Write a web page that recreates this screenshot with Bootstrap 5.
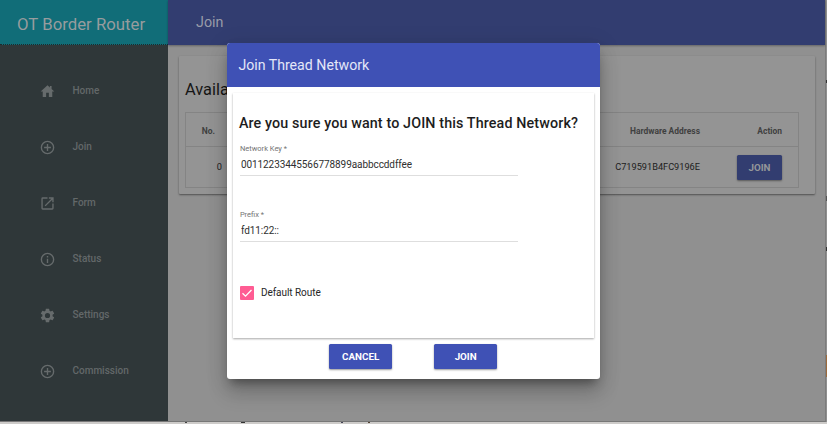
<!DOCTYPE html>
<html lang="en">
<head>
<meta charset="utf-8">
<meta name="viewport" content="width=device-width, initial-scale=1">
<title>OT Border Router</title>
<link href="https://cdn.jsdelivr.net/npm/bootstrap@5.3.0/dist/css/bootstrap.min.css" rel="stylesheet">
<style>
body{font-family:Roboto,sans-serif;font-size:10px;line-height:1.4;color:#202020;height:424px;
background:linear-gradient(#444,#444) 185px 422px/2px 1px no-repeat,linear-gradient(#333,#333) 241px 422px/4px 1px no-repeat,linear-gradient(#445,#445) 341px 422px/2px 1px no-repeat,linear-gradient(#543,#543) 368px 422px/2px 1px no-repeat,linear-gradient(#333,#333) 826px 80px/1px 3px no-repeat,linear-gradient(#555,#555) 826px 196px/1px 5px no-repeat,linear-gradient(#333,#333) 826px 247px/1px 4px no-repeat,linear-gradient(#9c6a3c,#9c6a3c) 826px 355px/1px 22px no-repeat,linear-gradient(#909090,#909090) 826px 0/1px 422px no-repeat,#cdcbc9}
.app{height:422px;margin-right:1px;background:#909090;border-bottom:1px solid #777;border-right:1px solid #7c7c7c}
.side{width:168px;background:#2f3739}
.brand{height:45px;background:#116d78;color:#979c9e;font-size:16.8px;padding:5px 0 0 17px;border-bottom:1px dotted #1c2a2d}
.side .nav-link{height:56px;padding:0 0 0 40px;color:#636869;font-weight:500;font-size:10px}
.side .nav{padding-top:18px}
.side svg{width:15px;height:15px;margin-right:17.5px;fill:#666b6c}
.topbar{height:45px;background:#323d70;color:#989ba8;font-size:14.3px;padding:0 0 0 28px;box-shadow:0 1px 2px rgba(0,0,0,.3)}
.panel{margin:11px 10px 0 11px;height:138px;background:#949494;border-radius:1px;box-shadow:0 1px 2px rgba(0,0,0,.45);padding:24px 16px 0 6px}
.panel h1{font-size:16.4px;line-height:20px;font-weight:400;margin-bottom:12px;color:#161616}
.grid{height:76px;border:1px solid #848484}
.grid .line{padding-right:16px}
.grid .heads{height:34px;padding-top:4px;border-bottom:1px solid #848484;color:#404040;font-weight:700;font-size:8.45px}
.cell-no{width:29px;text-align:right}
.cell-no.val{width:36px}
.cell-act{width:82px;text-align:right}
.vals{height:40px;padding-top:1px;font-size:9.2px;color:#202020;font-weight:400}
.act{background:#3f51b5;border:0;border-radius:1.5px;color:#fff;font-size:9.8px;font-weight:700;line-height:25px;height:25px;padding:0;width:63px;box-shadow:0 1px 2px rgba(0,0,0,.4)}
.act.dim{background:#323d70;color:#959799;width:45px}
.dialog-box{left:227.4px;top:42.5px;width:372.5px;height:336.5px;background:#fff;border:0;border-radius:3px;box-shadow:0 7px 9px -4px rgba(0,0,0,.35),0 14px 20px 0 rgba(0,0,0,.18),0 4px 22px 2px rgba(0,0,0,.1)}
.dialog-head{height:44.5px;background:#3f51b5;color:#e4e7f8;border-radius:3px 3px 0 0;font-size:14.15px;padding:2px 0 0 11px}
.sheet{margin:6px 5.5px 0;height:245px;padding:21.500px 6px 0;box-shadow:0 1px 2px rgba(0,0,0,.35)}
.sheet h2{font-size:14.3px;line-height:17px;font-weight:500;letter-spacing:.13px;margin:0 0 12px;color:#1d1d1d;white-space:nowrap}
.fld{width:278px;margin-left:1px;height:66px}
.fld label{display:block;font-size:7.5px;line-height:9px;color:#747474}
.fld input{border:0;border-bottom:1px solid #dedede;border-radius:0;padding:2px 1px 0;font-size:10px;letter-spacing:-.08px;height:23px;color:#303030;width:100%;display:block;background:none}
.tick{width:14px;height:14px;background:#ff5c93;border-radius:1px}
.route{font-size:10px;letter-spacing:-.05px;margin:10px 0 0 1px;gap:7px;color:#262626}
.choices{gap:42px;padding:5.500px 1px 0 0}
</style>
<script src="https://cdn.jsdelivr.net/npm/bootstrap@5.3.0/dist/js/bootstrap.bundle.min.js"></script>
</head>
<body class="overflow-hidden position-relative">
<div class="app d-flex">
  <aside class="side flex-shrink-0">
    <div class="brand d-flex align-items-center text-nowrap">OT Border Router</div>
    <nav class="nav flex-column flex-nowrap">
      <a class="nav-link d-flex align-items-center" href="#"><svg viewBox="1 1 22 22"><path d="M10 20v-6h4v6h5v-8h3L18 8.400V4h-2.500v2.100L12 3 2 12h3v8z"/></svg>Home</a>
      <a class="nav-link d-flex align-items-center" href="#"><svg viewBox="1 1 22 22"><path d="M13 7h-2v4H7v2h4v4h2v-4h4v-2h-4V7zM12 2a10 10 0 1 0 0 20 10 10 0 0 0 0-20zm0 18a8 8 0 1 1 0-16 8 8 0 0 1 0 16z"/></svg>Join</a>
      <a class="nav-link d-flex align-items-center" href="#"><svg viewBox="1 1 22 22"><path d="M19 19H5V5h7V3H5a2 2 0 0 0-2 2v14a2 2 0 0 0 2 2h14a2 2 0 0 0 2-2v-7h-2v7zM14 3v2h3.600l-9.800 9.800 1.400 1.400L19 6.400V10h2V3h-7z"/></svg>Form</a>
      <a class="nav-link d-flex align-items-center" href="#"><svg viewBox="1 1 22 22"><path d="M11 17h2v-6h-2v6zm1-15a10 10 0 1 0 0 20 10 10 0 0 0 0-20zm0 18a8 8 0 1 1 0-16 8 8 0 0 1 0 16zM11 9h2V7h-2v2z"/></svg>Status</a>
      <a class="nav-link d-flex align-items-center" href="#"><svg viewBox="1 1 22 22"><path d="M19.430 12.980c.04-.32.07-.64.07-.98s-.03-.66-.07-.98l2.110-1.650c.19-.15.24-.42.12-.64l-2-3.460c-.12-.22-.39-.3-.61-.22l-2.490 1c-.52-.4-1.080-.73-1.690-.98l-.38-2.650A.49.49 0 0 0 14 2h-4c-.25 0-.46.18-.49.42l-.38 2.650c-.61.25-1.170.59-1.690.98l-2.490-1c-.23-.09-.49 0-.61.22l-2 3.460c-.13.22-.07.49.12.64l2.110 1.650c-.04.32-.07.65-.07.98s.03.66.07.98l-2.110 1.650c-.19.15-.24.42-.12.64l2 3.460c.12.22.39.3.61.22l2.490-1c.52.4 1.080.73 1.690.98l.38 2.650c.03.24.24.42.49.42h4c.25 0 .46-.18.49-.42l.38-2.650c.61-.25 1.170-.59 1.690-.98l2.490 1c.23.09.49 0 .61-.22l2-3.460c.12-.22.07-.49-.12-.64zM12 15.800a3.800 3.800 0 1 1 0-7.600 3.800 3.800 0 0 1 0 7.600z"/></svg>Settings</a>
      <a class="nav-link d-flex align-items-center" href="#"><svg viewBox="1 1 22 22"><path d="M13 7h-2v4H7v2h4v4h2v-4h4v-2h-4V7zM12 2a10 10 0 1 0 0 20 10 10 0 0 0 0-20zm0 18a8 8 0 1 1 0-16 8 8 0 0 1 0 16z"/></svg>Commission</a>
    </nav>
  </aside>
  <main class="flex-grow-1">
    <header class="topbar d-flex align-items-center">Join</header>
    <section class="panel">
      <h1>Availa</h1>
      <div class="grid">
        <div class="line heads d-flex align-items-center"><span class="cell-no">No.</span><span class="ms-auto">Hardware Address</span><span class="cell-act">Action</span></div>
        <div class="line vals d-flex align-items-center"><span class="cell-no val">0</span><span class="ms-auto">C719591B4FC9196E</span><span class="cell-act"><button class="btn act dim">JOIN</button></span></div>
      </div>
    </section>
  </main>
</div>
<div class="dialog-box modal-content position-absolute" role="dialog" aria-label="Join Thread Network">
  <div class="dialog-head d-flex align-items-center">Join Thread Network</div>
  <div class="sheet">
    <h2>Are you sure you want to JOIN this Thread Network?</h2>
    <div class="fld"><label for="key">Network Key *</label><input id="key" value="00112233445566778899aabbccddffee"></div>
    <div class="fld"><label for="prefix">Prefix *</label><input id="prefix" value="fd11:22::"></div>
    <div class="route d-flex align-items-center"><span class="tick d-flex"><svg width="14" height="14" viewBox="0 0 14 14"><path d="M2.500 7.300l3 2.900 6-6.200" fill="none" stroke="#fff" stroke-width="1.300"/></svg></span>Default Route</div>
  </div>
  <div class="choices d-flex justify-content-center"><button class="btn act">CANCEL</button><button class="btn act">JOIN</button></div>
</div>
</body>
</html>
